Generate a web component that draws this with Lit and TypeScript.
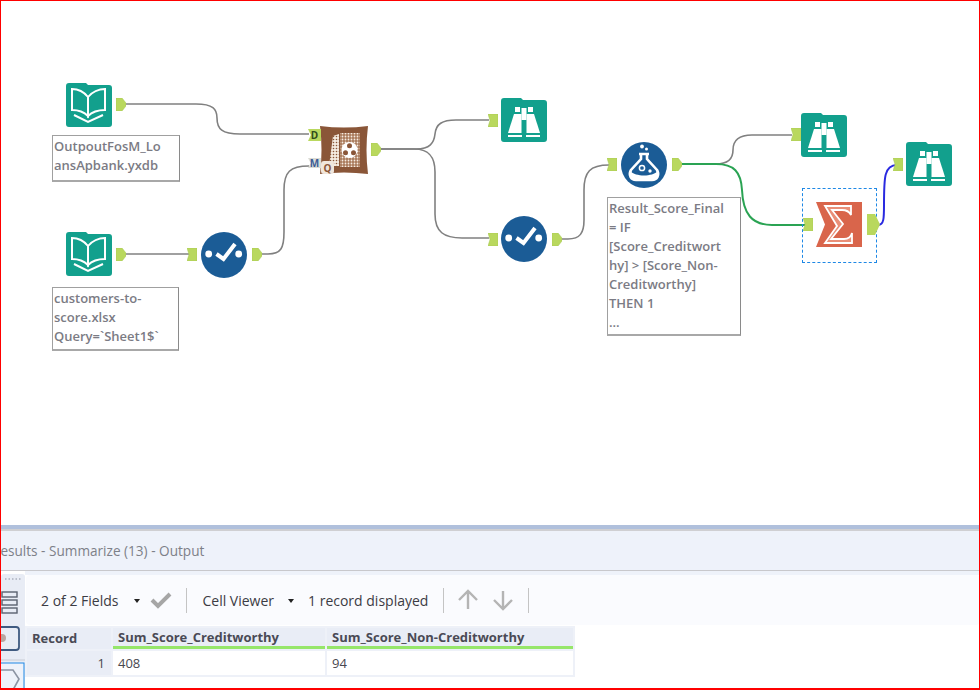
import { LitElement, html, css, svg } from 'lit';
import { customElement } from 'lit/decorators.js';

type Kind = 'book' | 'binoc' | 'check' | 'flask';

// tools sit on a free canvas, so coordinates are the content here
const tools: { kind: Kind; x: number; y: number }[] = [
  { kind: 'book', x: 66, y: 83 },
  { kind: 'book', x: 66, y: 232 },
  { kind: 'check', x: 201, y: 232 },
  { kind: 'binoc', x: 501, y: 98 },
  { kind: 'check', x: 501, y: 216 },
  { kind: 'flask', x: 621, y: 142 },
  { kind: 'binoc', x: 801, y: 113 },
  { kind: 'binoc', x: 906, y: 142 },
];

const outPorts = [
  [116, 98], [116, 248], [252, 248], [371, 143], [552, 233], [672, 158],
];
const inPorts = [
  [187, 248], [488, 114], [488, 233], [607, 158], [791, 128], [803, 218], [893, 158],
];

const wires = [
  { d: 'M125 104 H196 C213 104 217 109 217 118 C217 129 222 134 240 134 H309', c: '#808080' },
  { d: 'M125 254 H189', c: '#808080' },
  { d: 'M260 254 H268 C281 254 284 248 284 232 V190 C284 172 290 166 309 166', c: '#808080' },
  { d: 'M379 149 H416 C430 149 434 143 435 134 C436 124 442 120 456 120 H489', c: '#808080' },
  { d: 'M379 149 H414 C430 149 435 158 435 172 V214 C435 232 444 238 462 238 H489', c: '#808080' },
  { d: 'M559 239 H568 C580 239 584 233 584 220 V190 C584 172 590 165 609 165', c: '#808080' },
  { d: 'M679 164 H716 C729 164 733 158 733 150 C733 140 739 135 752 135 H792', c: '#808080' },
  { d: 'M679 164 H716 C734 164 741 172 742 190 C743 214 752 225 772 225 H806', c: '#2aa353', w: 2 },
  { d: 'M878 225 C884 225 884 218 884 205 C884 178 884 165 897 165', c: '#2a2ae0', w: 2 },
];

@customElement('app-root')
export class AppRoot extends LitElement {
  static styles = css`
    :host {
      display: block;
      position: relative;
      width: 980px;
      height: 690px;
      overflow: hidden;
      background: #fff;
      font-family: 'Open Sans', 'Liberation Sans', sans-serif;
    }
    .frame {
      position: absolute;
      inset: 0;
      border: 1px solid #f00;
      border-bottom-width: 2px;
      box-sizing: border-box;
      pointer-events: none;
    }
    .canvas {
      position: relative;
      height: 525px;
    }
    .wires {
      position: absolute;
      left: 0;
      top: 0;
    }
    .node {
      position: absolute;
    }
    .note {
      position: absolute;
      box-sizing: border-box;
      border: 1px solid #a0a0a0;
      border-right-color: #8a8a8a;
      border-bottom: 2px solid #a8a8a8;
      padding: 1px 0 0 1px;
      font-size: 13px;
      line-height: 19px;
      font-weight: 600;
      color: #7b7b84;
      background: #fff;
      white-space: nowrap;
    }
    .selected {
      position: absolute;
      left: 802px;
      top: 188px;
      width: 75px;
      height: 75px;
      box-sizing: border-box;
      border: 1px dashed #1e88e5;
    }
    .anchor {
      position: absolute;
      display: flex;
      align-items: center;
      justify-content: center;
      font-size: 10px;
      font-weight: 700;
    }
    .anchor-d {
      left: 308px;
      top: 129px;
      width: 13px;
      height: 12px;
      background: #b9d85e;
      color: #2f4a1c;
      clip-path: polygon(0 0, 100% 0, 100% 100%, 0 100%, 22% 50%);
    }
    .anchor-m {
      left: 308px;
      top: 158px;
      width: 13px;
      height: 10px;
      background: #dcdcd6;
      color: #3d5c96;
      clip-path: polygon(0 0, 100% 0, 100% 100%, 0 100%, 20% 50%);
    }
    .badge-q {
      left: 321px;
      top: 161px;
      width: 13px;
      height: 13px;
      border-radius: 3px;
      background: #f0e6dc;
      color: #8a5638;
      font-size: 10px;
    }
    .panel {
      height: 165px;
      background: #fff;
      border-top: 4px solid #b0c0dc;
      box-sizing: content-box;
    }
    .title {
      height: 39px;
      box-sizing: content-box;
      border-top: 2px solid #cfcfd2;
      border-bottom: 1px solid #c8c8cc;
      background: #eef2fa;
      display: flex;
      align-items: center;
      font-size: 13.6px;
      color: #7d8088;
      overflow: hidden;
      white-space: nowrap;
    }
    .title span {
      margin-left: -8px;
    }
    .body {
      display: flex;
      height: 120px;
    }
    .rail {
      width: 24px;
      margin-left: 1px;
      margin-top: 3px;
      background: #e8ecf5;
      flex: none;
      border-radius: 3px 3px 0 0;
    }
    .rail svg {
      display: block;
    }
    .main {
      flex: 1;
      display: flex;
      flex-direction: column;
      background: linear-gradient(#eef2fa 0, #eef2fa 4px, #fff 4px);
      padding: 4px 0 0 1px;
    }
    .toolbar {
      height: 50px;
      background: #fafbfe;
      border-radius: 4px;
      display: flex;
      align-items: center;
      padding-left: 15px;
      font-size: 14px;
      color: #3c3c44;
      white-space: nowrap;
    }
    .caret {
      width: 0;
      height: 0;
      border: 3.5px solid transparent;
      border-top: 4px solid #222;
      border-bottom: 0;
      margin: 2px 0 0 14px;
    }
    .caret.first {
      margin-left: 16px;
    }
    .sep {
      width: 1px;
      height: 25px;
      background: #c4c4c4;
    }
    .toolbar svg {
      display: block;
      flex: none;
    }
    table {
      border-collapse: separate;
      border-spacing: 2px;
      margin-top: 1px;
      margin-left: -1px;
      font-size: 13px;
      color: #484850;
      table-layout: fixed;
      width: 548px;
      background: #eef1f8;
    }
    th, td {
      padding: 0 0 0 5px;
      text-align: left;
      box-sizing: border-box;
    }
    th {
      height: 21px;
      font-weight: 700;
      background: #e9edf6;
      color: #4a4a55;
      line-height: 17px;
    }
    th.field {
      border-bottom: 3px solid #96e66a;
    }
    td {
      height: 24px;
      background: #fff;
    }
    td.num {
      text-align: right;
      padding: 0 6px 0 0;
      background: #e9edf6;
    }
  `;

  private port(x: number, y: number, out: boolean) {
    const pts = out ? '0,0 6,0 10,5 10,8 6,13 0,13' : '0,0 10,0 10,13 0,13 2,6.5';
    return html`<svg class="node" style="left:${x}px;top:${y}px" width="10" height="13" viewBox="0 0 10 13">
      <polygon points=${pts} fill="#b9d85e" stroke="#a4c750" stroke-width=".5"></polygon>
    </svg>`;
  }

  private glyph(kind: Kind) {
    if (kind === 'book') {
      return svg`
        <path d="M3 0H20l2 2H43a3 3 0 0 1 3 3V41a3 3 0 0 1-3 3H3a3 3 0 0 1-3-3V3a3 3 0 0 1 3-3Z" fill="#12a08d"></path>
        <g fill="none" stroke="#fff" stroke-width="2">
          <path d="M6 6C12 6 18 9 22 14V33C18 29 12 27 6 27Z"></path>
          <path d="M39 6C33 6 26 9 22 14V33C26 29 33 27 39 27Z"></path>
          <path d="M8 32L22 39L37 32"></path>
        </g>`;
    }
    if (kind === 'binoc') {
      return svg`
        <path d="M3 0H20l2 2H43a3 3 0 0 1 3 3V41a3 3 0 0 1-3 3H3a3 3 0 0 1-3-3V3a3 3 0 0 1 3-3Z" fill="#12a08d"></path>
        <g fill="#fff">
          <rect x="14" y="9" width="5" height="5"></rect>
          <rect x="27" y="9" width="5" height="5"></rect>
          <path d="M13 16H20.5V35H7Z"></path>
          <path d="M25.5 16H33L39 35H25.5Z"></path>
          <rect x="20.5" y="10" width="5" height="12"></rect>
          <rect x="7" y="37" width="14" height="2"></rect>
          <rect x="25" y="37" width="14" height="2"></rect>
        </g>`;
    }
    if (kind === 'check') {
      return svg`
        <circle cx="23" cy="23" r="23" fill="#1b5c96"></circle>
        <circle cx="7.7" cy="22" r="3.4" fill="#fff"></circle>
        <circle cx="37.7" cy="22" r="3.4" fill="#fff"></circle>
        <path d="M15.5 22L22.5 27L34 12" fill="none" stroke="#fff" stroke-width="4"></path>`;
    }
    return svg`
      <circle cx="23" cy="23" r="23" fill="#1b5c96"></circle>
      <circle cx="21" cy="4.5" r="1.9" fill="#fff"></circle>
      <circle cx="25.5" cy="7" r="1.5" fill="#fff"></circle>
      <path d="M18 12H28M20 12V17L10 28C7 33 10 38 15 38H31C36 38 39 33 36 28L26 17V12" fill="none" stroke="#fff" stroke-width="2.6"></path>
      <path d="M9 29C15 35 31 35 37 29C39 35 34 39 30 39H16C12 39 7 35 9 29Z" fill="#fff"></path>
      <circle cx="21" cy="26" r="2.6" fill="none" stroke="#fff" stroke-width="1.5"></circle>
      <circle cx="29" cy="29" r="1.7" fill="#fff"></circle>`;
  }

  private renderCross() {
    return html`<svg class="node" style="left:320px;top:126px" width="48" height="48" viewBox="0 0 48 48">
      <defs>
        <pattern id="dots" width="3" height="3" patternUnits="userSpaceOnUse">
          <rect width="3" height="3" fill="#a9795a"></rect>
          <circle cx="1.5" cy="1.5" r=".9" fill="#f6ede4"></circle>
        </pattern>
        <pattern id="dots-light" width="3" height="3" patternUnits="userSpaceOnUse">
          <rect width="3" height="3" fill="#f4eadf"></rect>
          <circle cx="1.5" cy="1.5" r=".8" fill="#8a5638"></circle>
        </pattern>
      </defs>
      <path d="M0 0Q24 3 48 0Q45 24 48 48Q24 45 0 48Q3 24 0 0Z" fill="#8a5638"></path>
      <path d="M13 10L19 8V40H9Z" fill="url(#dots-light)"></path>
      <rect x="20" y="7" width="20" height="34" fill="url(#dots)"></rect>
      <circle cx="29.5" cy="24" r="8" fill="#fff"></circle>
      <circle cx="29.5" cy="19.8" r="2.5" fill="#8a5638"></circle>
      <circle cx="25.5" cy="26.8" r="2.5" fill="#8a5638"></circle>
      <circle cx="33.5" cy="26.8" r="2.5" fill="#8a5638"></circle>
    </svg>`;
  }

  private renderSummarize() {
    return html`<svg class="node" style="left:816px;top:202px" width="46" height="46" viewBox="0 0 46 46">
      <path d="M0 0H46V45H0L9 22.5Z" fill="#d9654b"></path>
      <path d="M9 4H35V13C33 9 30 8 26 8H16L27 22L15 37H28C32 37 35 35 36 31V41H9L21 24Z" fill="#e98f78" stroke="#fff" stroke-width="1.8"></path>
    </svg>`;
  }

  render() {
    return html`
      <div class="canvas">
        <svg class="wires" width="980" height="525">
          ${wires.map((w) => svg`<path d=${w.d} fill="none" stroke=${w.c} stroke-width=${w.w ?? 1.6}></path>`)}
        </svg>
        ${tools.map(
          (t) => html`<svg class="node" style="left:${t.x}px;top:${t.y}px" width="46" height="46" viewBox="0 0 46 46">${this.glyph(t.kind)}</svg>`
        )}
        ${this.renderCross()}
        <div class="anchor anchor-d">D</div>
        <div class="anchor anchor-m">M</div>
        <div class="anchor badge-q">Q</div>
        ${outPorts.map(([x, y]) => this.port(x, y, true))}
        ${inPorts.map(([x, y]) => this.port(x, y, false))}
        <div class="selected"></div>
        ${this.renderSummarize()}
        <svg class="node" style="left:867px;top:214px" width="13" height="21" viewBox="0 0 13 21">
          <polygon points="0,0 8,0 13,10.5 8,21 0,21" fill="#b9d85e"></polygon>
        </svg>
        <div class="note" style="left:52px;top:135px;width:128px;height:47px">OutpoutFosM_Lo<br />ansApbank.yxdb</div>
        <div class="note" style="left:52px;top:287px;width:127px;height:64px">customers-to-<br />score.xlsx<br />Query=\`Sheet1$\`</div>
        <div class="note" style="left:607px;top:197px;width:134px;height:139px">Result_Score_Final<br />= IF<br />[Score_Creditwort<br />hy] &gt; [Score_Non-<br />Creditworthy]<br />THEN 1<br />...</div>
      </div>
      <div class="panel">
        <div class="title"><span>Results - Summarize (13) - Output</span></div>
        <div class="body">
          <div class="rail">
            <svg width="24" height="117" viewBox="0 0 24 117">
              <path d="M4 5H20" stroke="#aab0bd" stroke-width="1.5" stroke-dasharray="1.5 2"></path>
              <g fill="none" stroke="#5b6270" stroke-width="1.4">
                <rect x="1" y="18" width="15" height="5"></rect>
                <rect x="1" y="26" width="15" height="5"></rect>
                <rect x="1" y="34" width="15" height="5"></rect>
              </g>
              <rect x="-4" y="53" width="22" height="23" rx="3" fill="none" stroke="#3f5a80" stroke-width="1.8"></rect>
              <circle cx="1" cy="64" r="4" fill="#b9a5a0"></circle>
              <path d="M0 86H24" stroke="#c8ccd4"></path>
              <rect x="-4" y="89" width="27" height="30" fill="#eef2fa" stroke="#1e88e5"></rect>
              <path d="M-2 96H12L18 105L12 116H-2" fill="none" stroke="#8b93a2" stroke-width="1.6"></path>
            </svg>
          </div>
          <div class="main">
            <div class="toolbar">
              <span>2 of 2 Fields</span>
              <div class="caret first"></div>
              <svg style="margin-left:10px" width="22" height="18" viewBox="0 0 22 18">
                <path d="M2 9L8 15L20 3" fill="none" stroke="#a6a6a6" stroke-width="4"></path>
              </svg>
              <div class="sep" style="margin-left:14px"></div>
              <span style="margin-left:15px">Cell Viewer</span>
              <div class="caret"></div>
              <span style="margin-left:14px">1 record displayed</span>
              <div class="sep" style="margin-left:15px"></div>
              <svg style="margin-left:13px" width="22" height="22" viewBox="0 0 22 22">
                <path d="M11 20V3M2 11L11 2L20 11" fill="none" stroke="#b4b4b4" stroke-width="2.4"></path>
              </svg>
              <svg style="margin-left:13px" width="22" height="22" viewBox="0 0 22 22">
                <path d="M11 2V19M2 11L11 20L20 11" fill="none" stroke="#b4b4b4" stroke-width="2.4"></path>
              </svg>
              <div class="sep" style="margin-left:14px"></div>
            </div>
            <table>
              <colgroup>
                <col style="width:84px" /><col style="width:212px" /><col style="width:246px" />
              </colgroup>
              <tr>
                <th>Record</th>
                <th class="field">Sum_Score_Creditworthy</th>
                <th class="field">Sum_Score_Non-Creditworthy</th>
              </tr>
              <tr>
                <td class="num">1</td>
                <td>408</td>
                <td>94</td>
              </tr>
            </table>
          </div>
        </div>
      </div>
      <div class="frame"></div>
    `;
  }
}
